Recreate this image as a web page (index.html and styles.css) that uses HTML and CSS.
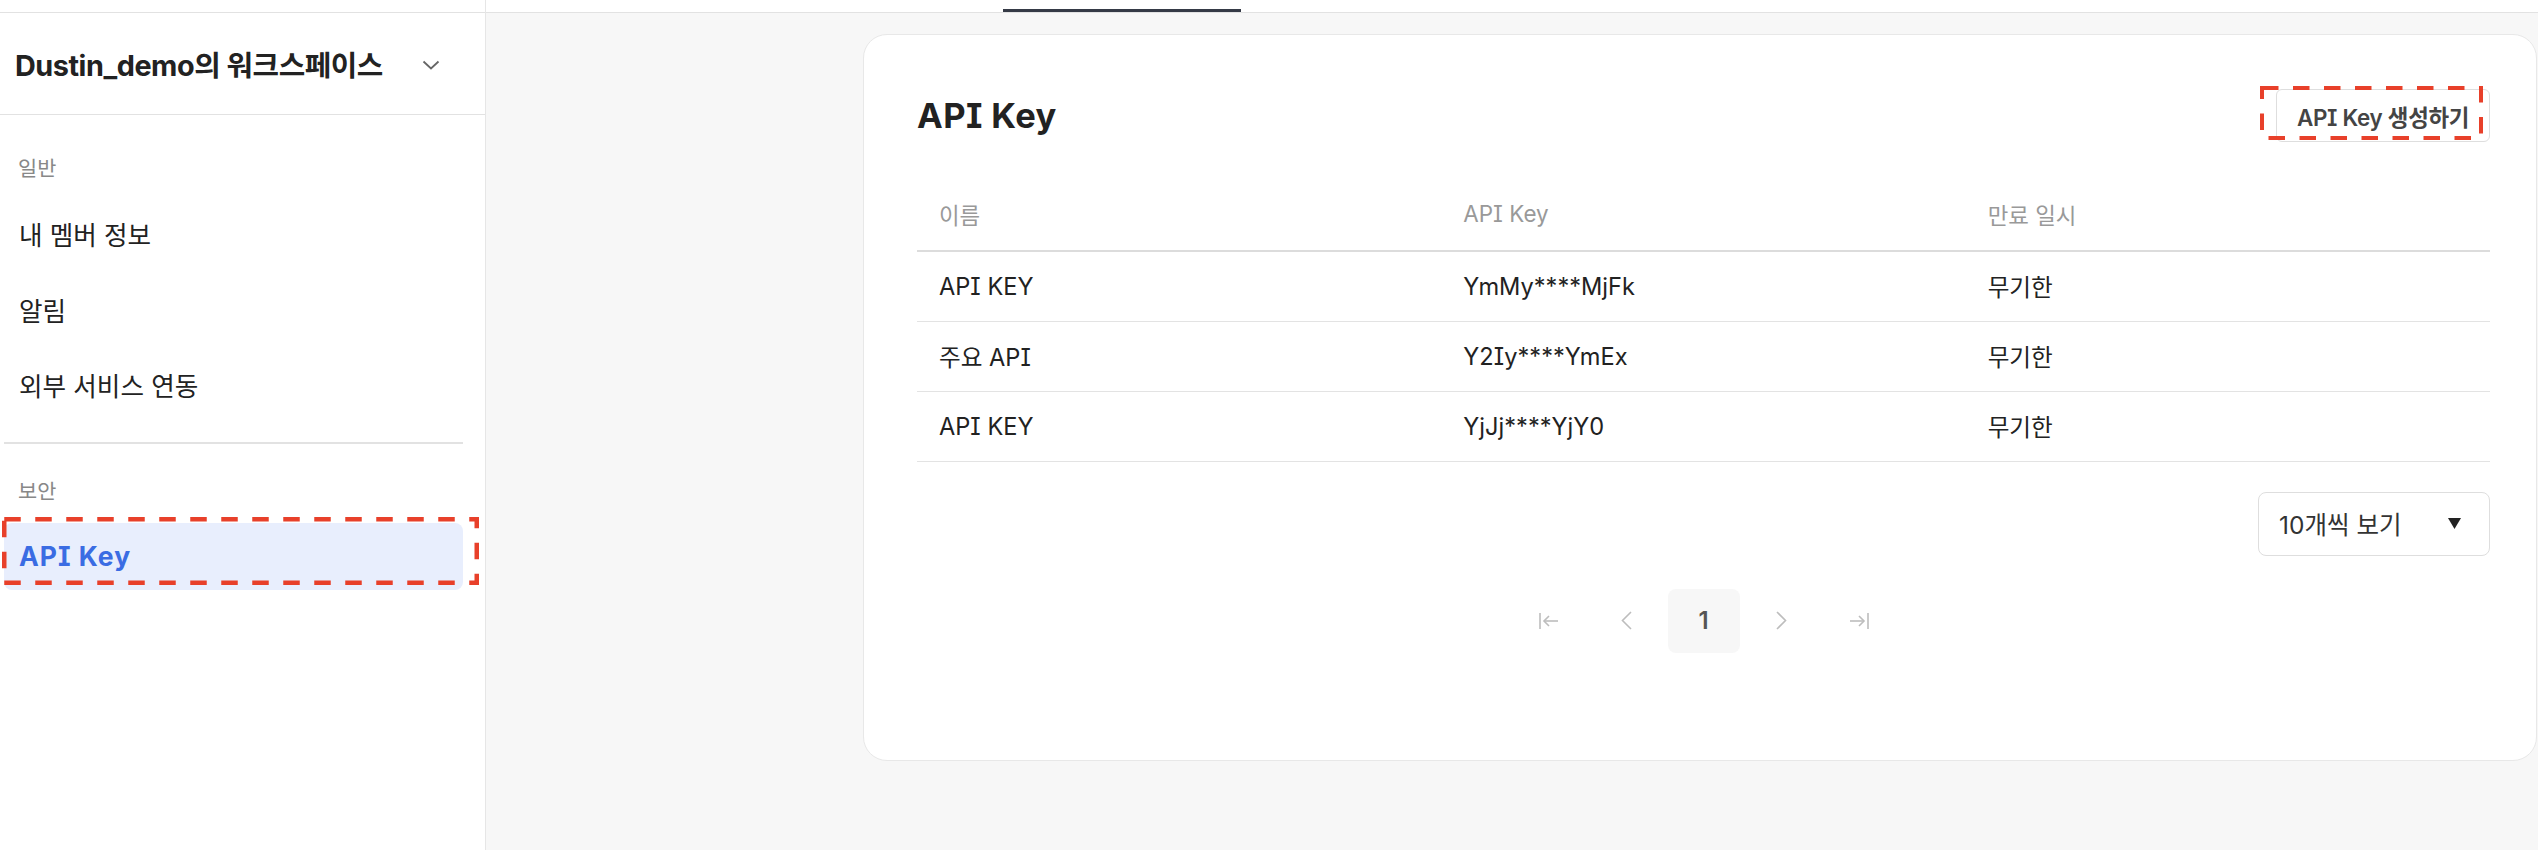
FILE: index.html
```html
<!DOCTYPE html>
<html lang="ko">
<head>
<meta charset="utf-8">
<title>API Key</title>
<link rel="stylesheet" href="styles.css">
</head>
<body>
<div class="app">
  <aside class="sidebar">
    <div class="top-strip"></div>
    <div class="ws-header">
      <span class="ws-title">Dustin_demo의 워크스페이스</span>
      <svg class="ws-chevron" width="18" height="10" viewBox="0 0 18 10"><polyline points="1.5,1.5 9,8.5 16.5,1.5" fill="none" stroke="#666" stroke-width="1.8"/></svg>
    </div>
    <nav class="menu">
      <div class="menu-label">일반</div>
      <a class="menu-item">내 멤버 정보</a>
      <a class="menu-item">알림</a>
      <a class="menu-item">외부 서비스 연동</a>
      <div class="menu-divider"></div>
      <div class="menu-label">보안</div>
      <a class="menu-item active">API Key
        <svg class="focus-ring side-ring" width="477" height="68" viewBox="0 0 477 68"><rect x="2.25" y="2.25" width="472.5" height="63.5" fill="none" stroke="#e8402a" stroke-width="4.5" stroke-dasharray="16.5 14.5"/></svg>
      </a>
    </nav>
  </aside>
  <main class="main">
    <header class="topbar"><div class="tab-indicator"></div></header>
    <section class="card">
      <div class="card-head">
        <h1 class="card-title">API Key</h1>
        <button class="btn-create">API Key 생성하기
          <svg class="focus-ring btn-ring" width="223" height="54" viewBox="0 0 223 54"><rect x="2" y="2" width="219" height="50" fill="none" stroke="#e8402a" stroke-width="4" stroke-dasharray="16.5 14.5"/></svg>
        </button>
      </div>
      <table class="keys">
        <thead>
          <tr><th>이름</th><th>API Key</th><th>만료 일시</th></tr>
        </thead>
        <tbody>
          <tr><td>API KEY</td><td>YmMy****MjFk</td><td>무기한</td></tr>
          <tr><td>주요 API</td><td>Y2Iy****YmEx</td><td>무기한</td></tr>
          <tr><td>API KEY</td><td>YjJj****YjY0</td><td>무기한</td></tr>
        </tbody>
      </table>
      <div class="table-footer">
        <div class="page-size">
          <span>10개씩 보기</span>
          <svg width="13" height="11" viewBox="0 0 13 11"><polygon points="0,0 13,0 6.5,11" fill="#222"/></svg>
        </div>
      </div>
      <div class="pagination">
        <span class="pg-btn"><svg width="20" height="18" viewBox="0 0 20 18"><g fill="none" stroke="#bdbdbd" stroke-width="1.6"><line x1="1" y1="1" x2="1" y2="17"/><line x1="19" y1="9" x2="5" y2="9"/><polyline points="10,4 5,9 10,14"/></g></svg></span>
        <span class="pg-btn"><svg width="11" height="19" viewBox="0 0 11 19"><polyline points="10,1 1.5,9.5 10,18" fill="none" stroke="#bdbdbd" stroke-width="1.6"/></svg></span>
        <span class="pg-btn current">1</span>
        <span class="pg-btn"><svg width="11" height="19" viewBox="0 0 11 19"><polyline points="1,1 9.5,9.5 1,18" fill="none" stroke="#bdbdbd" stroke-width="1.6"/></svg></span>
        <span class="pg-btn"><svg width="20" height="18" viewBox="0 0 20 18"><g fill="none" stroke="#bdbdbd" stroke-width="1.6"><line x1="19" y1="1" x2="19" y2="17"/><line x1="1" y1="9" x2="15" y2="9"/><polyline points="10,4 15,9 10,14"/></g></svg></span>
      </div>
    </section>
  </main>
</div>
</body>
</html>
```

FILE: styles.css
```css
* { box-sizing: border-box; }
html, body {
  margin: 0;
  padding: 0;
  width: 2538px;
  height: 850px;
  overflow: hidden;
  background: #f7f7f7;
  font-family: Inter, "Noto Sans CJK KR", sans-serif;
  font-feature-settings: "cv08";
  color: #222;
}
.app {
  display: flex;
  height: 850px;
}
.sidebar {
  width: 486px;
  flex: none;
  background: #fff;
  border-right: 1px solid #e6e6e6;
  display: flex;
  flex-direction: column;
}
.top-strip {
  height: 13px;
  border-bottom: 1px solid #e2e2e2;
}
.ws-header {
  height: 102px;
  border-bottom: 1px solid #e2e2e2;
  display: flex;
  align-items: center;
  padding-left: 15px;
  gap: 39px;
}
.ws-title {
  font-size: 28.8px;
  font-weight: 700;
  color: #222;
  letter-spacing: -0.45px;
}
.ws-chevron { margin-top: 3px; }
.menu {
  display: flex;
  flex-direction: column;
  padding: 38px 22px 0 4px;
}
.menu-label {
  height: 31px;
  line-height: 31px;
  padding-left: 14px;
  font-size: 20.8px;
  color: #888;
  margin-bottom: 16px;
}
.menu-item {
  position: relative;
  height: 67.5px;
  display: flex;
  align-items: center;
  padding-left: 15px;
  font-size: 25.6px;
  color: #222;
  border-radius: 8px;
  margin-bottom: 8px;
}
.menu-divider {
  height: 2px;
  background: #e2e2e2;
  margin: 15.5px 0 31.5px;
}
.menu-item.active {
  background: #e8eefd;
  color: #3a6ce3;
  font-size: 26.5px;
  font-weight: 700;
  letter-spacing: 1px;
}
.focus-ring {
  position: absolute;
  pointer-events: none;
}
.side-ring { left: -2px; top: -6px; }

.main {
  flex: 1;
  display: flex;
  flex-direction: column;
  min-width: 0;
}
.topbar {
  height: 13px;
  flex: none;
  background: #fff;
  border-bottom: 1px solid #e2e2e2;
  display: flex;
  align-items: flex-end;
  padding-left: 517px;
}
.tab-indicator {
  width: 238px;
  height: 3px;
  background: #353a46;
}
.card {
  margin: 21px 0 0 377px;
  width: 1674px;
  height: 727px;
  flex: none;
  background: #fff;
  border: 1px solid #e8e8e8;
  border-radius: 24px;
  padding: 54px 46px 0 53px;
}
.card-head {
  display: flex;
  align-items: center;
  justify-content: space-between;
  height: 53px;
}
.card-title {
  margin: 0;
  font-size: 34.5px;
  font-weight: 700;
  color: #222;
  letter-spacing: 0.4px;
}
.btn-create {
  position: relative;
  height: 53px;
  width: 214px;
  padding: 0;
  background: #fff;
  border: 1.5px solid #dedede;
  border-radius: 6px;
  font-family: inherit;
  font-feature-settings: "cv08";
  font-size: 22.4px;
  font-weight: 600;
  color: #444;
  letter-spacing: -0.3px;
}
.btn-ring { left: -17px; top: -4px; }

.keys {
  width: 100%;
  margin-top: 35px;
  border-collapse: collapse;
  table-layout: fixed;
}
.keys th {
  height: 74px;
  text-align: left;
  padding: 0 0 0 22px;
  font-size: 22.4px;
  font-weight: 400;
  color: #999;
  border-bottom: 2px solid #dcdcdc;
}
.keys td {
  height: 70px;
  padding: 0 0 0 22px;
  font-size: 23.6px;
  color: #222;
  border-bottom: 1px solid #e3e3e3;
}
.table-footer {
  display: flex;
  justify-content: flex-end;
  margin-top: 30px;
}
.page-size {
  width: 232px;
  height: 64px;
  border: 1.5px solid #dedede;
  border-radius: 8px;
  display: flex;
  align-items: center;
  justify-content: space-between;
  padding: 0 28px 0 20px;
  font-size: 24.5px;
  color: #333;
}
.pagination {
  display: flex;
  justify-content: center;
  gap: 5.5px;
  margin-top: 33px;
}
.pg-btn {
  width: 72px;
  height: 64px;
  display: flex;
  align-items: center;
  justify-content: center;
  border-radius: 8px;
}
.pg-btn.current {
  background: #f7f7f7;
  font-size: 24px;
  font-weight: 600;
  color: #555;
}
```
